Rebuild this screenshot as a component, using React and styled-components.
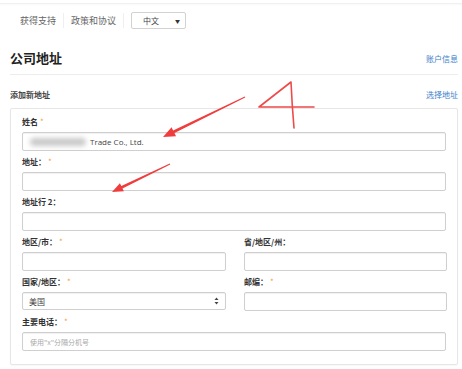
import styled, { createGlobalStyle } from "styled-components";

const GlobalStyle = createGlobalStyle`
  html, body {
    margin: 0;
    padding: 0;
    background: #fff;
  }
  body {
    font-family: "Noto Sans CJK SC", "Open Sans", sans-serif;
    color: #333;
  }
`;

const fields = [
  { label: "地址：", required: true },
  { label: "地址行 2：", required: false },
];

function Label({ text, required }) {
  return (
    <FieldLabel>
      {text}
      {required && <Star>*</Star>}
    </FieldLabel>
  );
}

function App() {
  return (
    <Page>
      <GlobalStyle />
      <TopStrip />
      <NavRow>
        <NavLink>获得支持</NavLink>
        <NavDivider />
        <NavLink>政策和协议</NavLink>
        <NavDivider />
        <LangSelect>
          <span>中文</span>
          <DownArrow>▼</DownArrow>
        </LangSelect>
      </NavRow>

      <TitleRow>
        <Title>公司地址</Title>
        <SideLink>账户信息</SideLink>
      </TitleRow>

      <SubRow>
        <SubTitle>添加新地址</SubTitle>
        <SideLink>选择地址</SideLink>
      </SubRow>

      <Card>
        <Field>
          <Label text="姓名" required />
          <InputBox>
            <Blurred />
            <span>Trade Co., Ltd.</span>
          </InputBox>
        </Field>
        {fields.map((f) => (
          <Field key={f.label}>
            <Label text={f.label} required={f.required} />
            <Input />
          </Field>
        ))}
        <TwoCols>
          <Field>
            <Label text="地区/市：" required />
            <Input />
          </Field>
          <Field>
            <Label text="省/地区/州：" />
            <Input />
          </Field>
          <Field>
            <Label text="国家/地区：" required />
            <InputBox $select>
              <span>美国</span>
              <svg width="5" height="8" viewBox="0 0 5 8">
                <path d="M2.5 0.5 L4.5 3 L0.5 3 Z" fill="#444" />
                <path d="M2.5 7.5 L4.5 5 L0.5 5 Z" fill="#444" />
              </svg>
            </InputBox>
          </Field>
          <Field>
            <Label text="邮编：" required />
            <Input />
          </Field>
        </TwoCols>
        <Field $last>
          <Label text="主要电话：" required />
          <Input placeholder='使用"x"分隔分机号' />
        </Field>
      </Card>

      <Marks width="462" height="369" viewBox="0 0 462 369">
        <polygon
          fill="#ef3d3d"
          points="244.8,96.6 173.1,130.4 171.6,127.2 163,137 176,136.2 174.5,133 245.2,97.4"
        />
        <polygon
          fill="#ef3d3d"
          points="169.8,163.6 121.3,186 119.9,183.2 112,192 123.9,191.3 122.5,188.4 170.2,164.4"
        />
        <path
          d="M291 82 L259 107 L314 107 M291 82 Q292 105 294 128"
          fill="none"
          stroke="#ef4a4a"
          strokeWidth="1.6"
          strokeLinecap="round"
          strokeLinejoin="round"
        />
      </Marks>
    </Page>
  );
}

const Page = styled.div`
  position: relative;
  width: 462px;
  height: 369px;
  overflow: hidden;
  background: #fff;
`;

const TopStrip = styled.div`
  height: 3px;
  border-bottom: 1px solid #f0f0f0;
  box-shadow: 0 1px 2px rgba(0, 0, 0, 0.03);
`;

const NavRow = styled.div`
  display: flex;
  align-items: center;
  height: 17px;
  margin-top: 8px;
  padding-left: 20px;
`;

const NavLink = styled.span`
  font-size: 9px;
  color: #666;
  line-height: 17px;
`;

const NavDivider = styled.div`
  width: 1px;
  height: 15px;
  background: #efefef;
  margin: 0 7px;
`;

const LangSelect = styled.div`
  box-sizing: border-box;
  width: 55px;
  height: 17px;
  border: 1px solid #d2d2d2;
  border-radius: 2px;
  display: flex;
  align-items: center;
  justify-content: space-between;
  padding: 0 5px 0 11px;
  font-size: 8px;
  color: #444;
`;

const DownArrow = styled.span`
  font-size: 5px;
  color: #333;
`;

const TitleRow = styled.div`
  display: flex;
  align-items: center;
  justify-content: space-between;
  margin: 18px 4px 0 10px;
  height: 22px;
  padding-bottom: 5px;
  border-bottom: 1px solid #ececec;
`;

const Title = styled.h1`
  margin: 0;
  font-size: 13px;
  font-weight: 700;
  color: #222;
  line-height: 22px;
`;

const SideLink = styled.span`
  font-size: 8px;
  color: #3d7fc9;
`;

const SubRow = styled.div`
  display: flex;
  align-items: center;
  justify-content: space-between;
  margin: 13px 4px 0 10px;
  height: 12px;
`;

const SubTitle = styled.span`
  font-size: 8px;
  font-weight: 700;
  color: #444;
`;

const Card = styled.div`
  box-sizing: border-box;
  width: 448px;
  margin: 8px 0 0 10px;
  border: 1px solid #e6e6e6;
  border-radius: 2px;
  padding: 8px 11px 13px 11px;
  box-shadow: 0 1px 2px rgba(0, 0, 0, 0.04);
`;

const Field = styled.div`
  display: flex;
  flex-direction: column;
  gap: 5px;
  margin-bottom: ${(p) => (p.$last ? "0" : "6px")};
`;

const TwoCols = styled.div`
  display: grid;
  grid-template-columns: 204px 203px;
  column-gap: 18px;
`;

const FieldLabel = styled.label`
  font-size: 8px;
  font-weight: 700;
  color: #333;
  line-height: 10px;
  height: 10px;
`;

const Star = styled.span`
  color: #f0a53a;
  margin-left: 2px;
  font-weight: 400;
`;

const Input = styled.input`
  box-sizing: border-box;
  width: 100%;
  height: 19px;
  border: 1px solid #cfcfcf;
  border-radius: 2px;
  box-shadow: inset 0 1px 1px rgba(0, 0, 0, 0.06);
  padding: 0 7px;
  font-family: "Noto Sans CJK SC", sans-serif;
  font-size: 7px;
  outline: none;
  &::placeholder {
    color: #aaa;
  }
`;

const InputBox = styled.div`
  box-sizing: border-box;
  width: 100%;
  height: ${(p) => (p.$select ? "18px" : "19px")};
  border: 1px solid #cfcfcf;
  border-radius: 2px;
  box-shadow: inset 0 1px 1px rgba(0, 0, 0, 0.06);
  display: flex;
  align-items: center;
  justify-content: ${(p) => (p.$select ? "space-between" : "flex-start")};
  padding: ${(p) => (p.$select ? "0 6px 0 6px" : "0 0 0 7px")};
  font-family: "Open Sans", "Noto Sans CJK SC", sans-serif;
  font-size: 8px;
  color: #444;
`;

const Blurred = styled.span`
  display: inline-block;
  width: 56px;
  height: 8px;
  margin-right: 4px;
  background: #c9c9c9;
  border-radius: 4px;
  filter: blur(2.5px);
`;

const Marks = styled.svg`
  position: absolute;
  left: 0;
  top: 0;
  pointer-events: none;
`;

export default App;
